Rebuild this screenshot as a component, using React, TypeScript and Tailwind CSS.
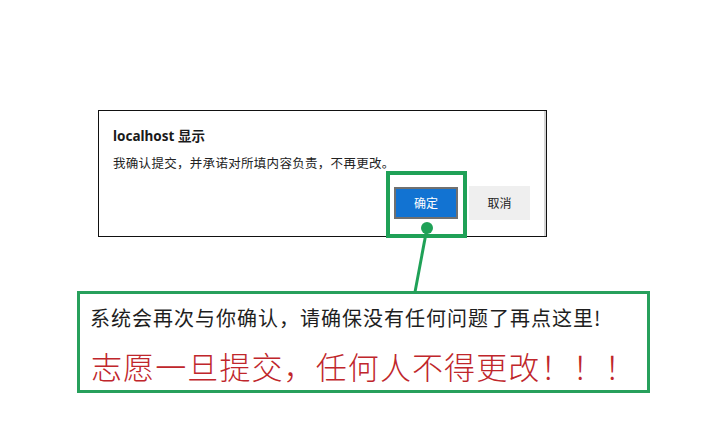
import React from "react";

export default function App() {
  const cjk = { fontFamily: '"Noto Sans CJK SC", "Noto Sans", sans-serif' } as React.CSSProperties;
  return (
    <div className="relative w-[720px] h-[439px] bg-white overflow-hidden" style={cjk}>
      <div className="pt-[110px] pl-[98px]">
        <div className="w-[449px] h-[127px] border border-[#111] shadow-[inset_-2px_0_0_#d4d4d4] bg-white flex flex-col">
          <div
            className="pl-[14px] pt-[16px] text-[13.5px] leading-[18px] font-bold text-[#1a1a1a]"
            style={{ fontFamily: '"Noto Sans", "Noto Sans CJK SC", sans-serif' }}
          >
            localhost 显示
          </div>
          <div className="pl-[14px] mt-[9px] text-[12.5px] leading-[18px] tracking-[0.3px] text-[#222]">
            我确认提交，并承诺对所填内容负责，不再更改。
          </div>
          <div className="mt-[14px] flex justify-end items-center gap-[11px] pr-[16px]">
            <div className="w-[64px] h-[32px] border-2 border-[#707070] bg-[#1273d2] flex items-center justify-center text-[12px] text-white">
              确定
            </div>
            <div className="w-[61px] h-[34px] bg-[#efefef] flex items-center justify-center text-[12px] text-[#222]">
              取消
            </div>
          </div>
        </div>
      </div>
      <div className="mt-[54px] ml-[77px] w-[573px] h-[102px] border-[3px] border-[#27a05c] flex flex-col">
        <div className="pl-[10px] mt-[10px] text-[20px] leading-[28px] tracking-[1px] text-[#1e1e1e]">
          系统会再次与你确认，请确保没有任何问题了再点这里!
        </div>
        <div className="pl-[11px] mt-[14px] text-[31px] leading-[40px] tracking-[1.1px] font-light text-[#c0262b]">
          志愿一旦提交，任何人不得更改！！！
        </div>
      </div>
      <svg className="absolute left-0 top-0 pointer-events-none" width="720" height="439" viewBox="0 0 720 439">
        <rect x="388" y="173" width="77" height="63" fill="none" stroke="#1fa157" strokeWidth="4" />
        <line x1="427" y1="228" x2="415" y2="292" stroke="#1fa157" strokeWidth="3" />
        <circle cx="427" cy="228" r="6" fill="#1fa157" />
      </svg>
    </div>
  );
}
